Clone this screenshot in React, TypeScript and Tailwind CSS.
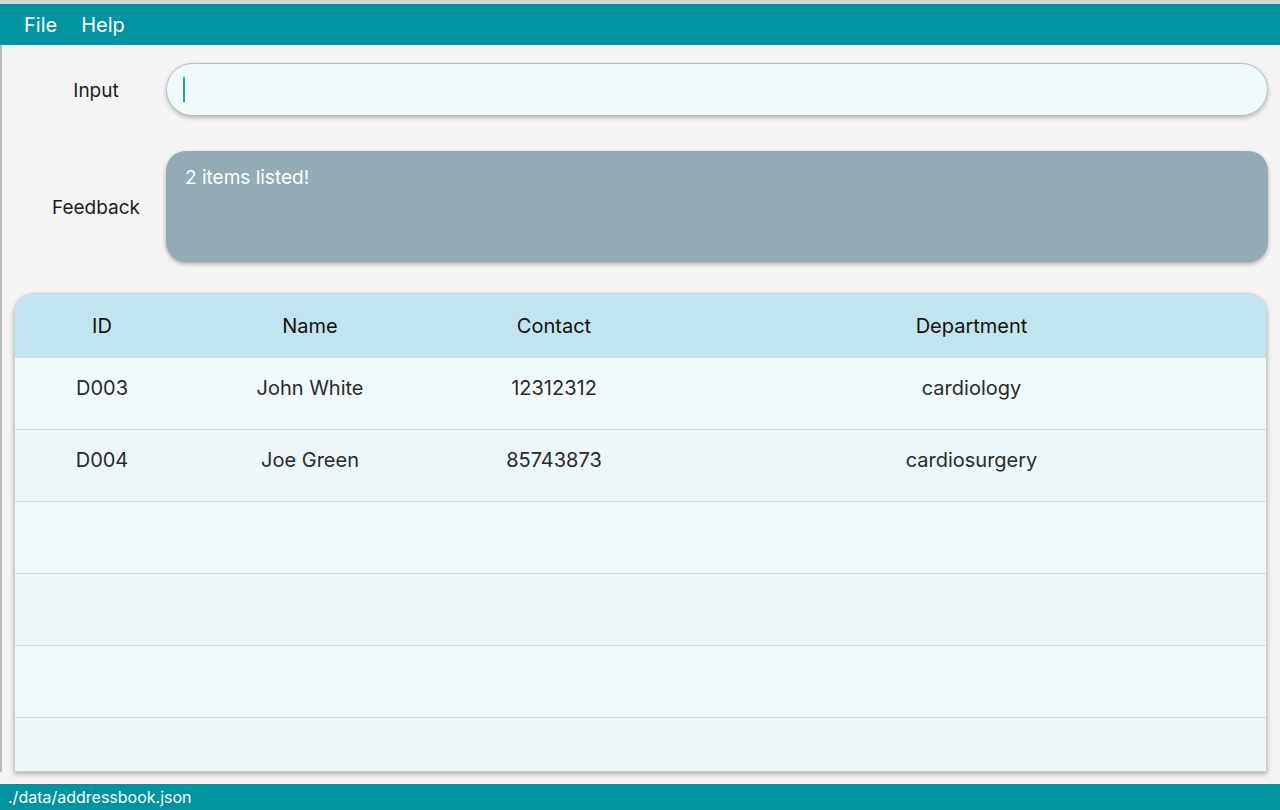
const rows = [
  { id: 'D003', name: 'John White', contact: '12312312', dept: 'cardiology' },
  { id: 'D004', name: 'Joe Green', contact: '85743873', dept: 'cardiosurgery' },
  null,
  null,
  null,
  null
]

const font = { fontFamily: 'Inter, "Liberation Sans", sans-serif' }

export default function App() {
  return (
    <div
      className="flex h-[810px] w-[1280px] flex-col overflow-hidden bg-[#f4f4f4] text-[#1c1c1c]"
      style={font}
    >
      <div className="h-[4px] shrink-0 bg-[#d4d6d6]" />
      <div className="flex h-[41px] shrink-0 items-center gap-[24px] bg-[#0093a0] pl-[24px] text-[20px] text-white">
        <span>File</span>
        <span>Help</span>
      </div>

      <div className="flex flex-1 border-l-2 border-[#b8bcbd]">
        <div className="flex flex-1 flex-col">
          <div className="mt-[18px] flex items-center">
            <div className="w-[164px] pl-[24px] pt-[4px] text-center text-[19px]">Input</div>
            <div className="flex h-[53px] w-[1102px] items-center rounded-full border border-[#b9bfc1] bg-[#f1fafb] pl-[16px] shadow-[0_2px_4px_rgba(0,0,0,0.25)]">
              <div className="h-[25px] w-[2px] bg-[#1aa3ad]" />
            </div>
          </div>

          <div className="mt-[35px] flex items-center">
            <div className="w-[164px] pl-[24px] pt-[4px] text-center text-[19px]">Feedback</div>
            <div className="h-[111px] w-[1102px] rounded-[20px] bg-[#93abb5] px-[19px] pt-[13px] text-[19px] text-white shadow-[0_2px_4px_rgba(0,0,0,0.3)]">
              2 items listed!
            </div>
          </div>

          <div className="mt-[31px] ml-[12px] flex h-[479px] w-[1253px] flex-col overflow-hidden rounded-t-[20px] border border-[#c9cfd1] bg-[#f1fafb] shadow-[0_2px_5px_rgba(0,0,0,0.3)]">
            <div className="flex h-[64px] shrink-0 items-center bg-[#c1e4ee] text-[20px] text-[#111]">
              <div className="w-[174px] text-center">ID</div>
              <div className="w-[242px] text-center">Name</div>
              <div className="w-[246px] text-center">Contact</div>
              <div className="flex-1 text-center">Department</div>
            </div>
            {rows.map((r, i) => (
              <div
                key={i}
                className={`flex h-[72px] shrink-0 items-center border-b border-[#d2d8db] pb-[12px] text-[20px] text-[#2a2a2a] ${
                  i % 2 === 0 ? 'bg-[#f1fafb]' : 'bg-[#edf6f8]'
                }`}
              >
                <div className="w-[174px] text-center">{r?.id}</div>
                <div className="w-[242px] text-center">{r?.name}</div>
                <div className="w-[246px] text-center">{r?.contact}</div>
                <div className="flex-1 text-center">{r?.dept}</div>
              </div>
            ))}
          </div>
        </div>
      </div>

      <div className="mt-[12px] flex h-[26px] shrink-0 items-center bg-[#0093a0] pl-[8px] text-[16px] text-white">
        ./data/addressbook.json
      </div>
    </div>
  )
}
